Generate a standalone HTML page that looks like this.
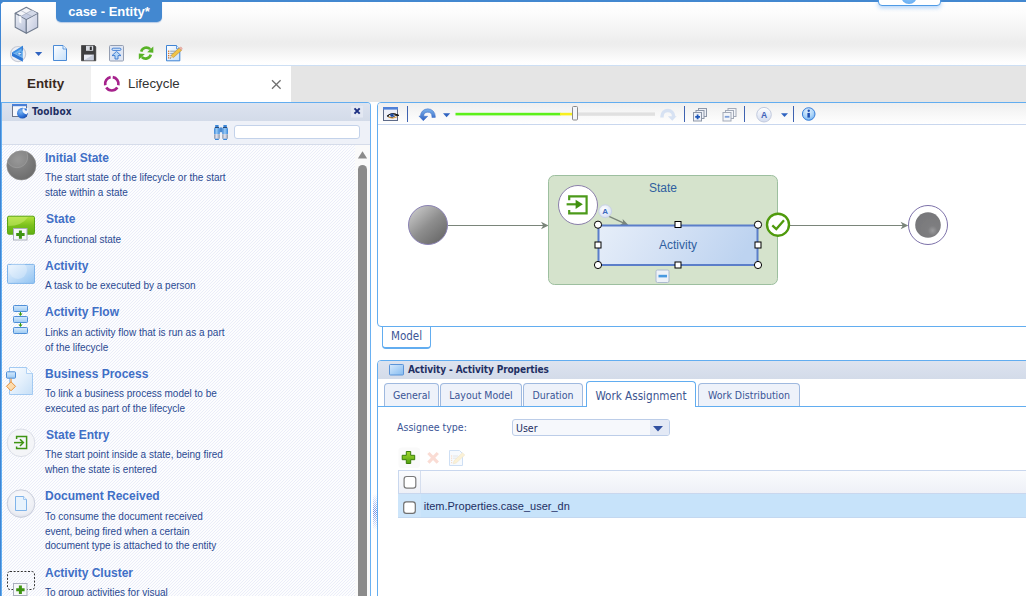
<!DOCTYPE html>
<html><head><meta charset="utf-8"><title>case - Entity</title>
<style>
*{box-sizing:border-box;margin:0;padding:0}
html,body{width:1026px;height:596px;overflow:hidden;background:#fff}
body{font-family:"Liberation Sans",sans-serif;position:relative;font-size:11px;color:#233a7a}
.abs{position:absolute}
#hdr{left:0;top:0;width:1026px;height:66px;background:linear-gradient(#fff 2px,#fcfcfc 14px,#f4f4f4 30px,#ededed 42px,#eeeeee 46px,#f6f6f6 54px,#fefefe 62px,#fff 65px);border-bottom:1px solid #cddff4}
#topb{left:0;top:0;width:1026px;height:2px;background:#4388d0}
#leftb{left:0;top:0;width:1px;height:596px;background:#3f86d4}
#apptab{left:56px;top:0;width:106px;height:22px;background:#4388d0;border-radius:0 0 5px 5px;color:#fff;font-weight:bold;font-size:13px;line-height:24px;text-align:center;box-shadow:0 1px 1px rgba(60,120,200,.35)}
#crn{left:1px;top:2px;width:3px;height:3px;background:radial-gradient(circle at 3px 3px,rgba(67,136,208,0) 2.6px,#4388d0 3.2px)}
#tabbar{left:1px;top:66px;width:1025px;height:36px;background:#e5e5e5}
#tEntity{left:1px;top:66px;width:90px;height:36px;background:#efefef;font-weight:bold;font-size:13.4px;color:#3a2a1e;line-height:36px;padding-left:26px}
#tLife{left:91px;top:66px;width:200px;height:36px;background:#fff;font-size:13.3px;color:#333;line-height:36px}

#tbx{left:1px;top:102px;width:370px;height:494px;border-radius:0 4px 0 0;border-top:1px solid #62adf0;border-right:1px solid #6ab1f2;border-left:1px solid #62adf0;background:#fafafa}
#tbxh{left:2px;top:103px;width:368px;height:18px;border-radius:0 3px 0 0;background:linear-gradient(#dde3ef,#d3dbe9);font-family:"DejaVu Sans Condensed","DejaVu Sans","Liberation Sans",sans-serif}
#tbxh b{position:absolute;left:30px;top:0;line-height:18px;font-size:10px;color:#1e2f63;font-weight:bold;letter-spacing:.15px}
#tbxs{left:2px;top:121px;width:368px;height:24px;background:#eef1f8;border-bottom:1px solid #d5dcea}
#srch{left:234px;top:125px;width:126px;height:14px;border:1px solid #c3d2ea;border-radius:3px;background:#fff}
#list{left:2px;top:145px}
.it b,.it span{position:absolute;left:45px;white-space:nowrap;display:block}
.it b{font-size:12px;line-height:14px;color:#3f6fc6;font-weight:bold}
.it span{font-size:10px;line-height:15px;color:#2a4a92}
#trt{left:878px;top:-4px;width:63px;height:10px;border:1px solid #4f9be6;border-radius:4px;background:#fff;box-shadow:0 2px 4px rgba(90,160,240,.45);overflow:hidden}
#trt i{position:absolute;left:22px;top:-9px;width:16px;height:16px;border-radius:8px;background:radial-gradient(circle at 50% 40%,#9ccffb,#5aa5f0)}
#sbar{left:358px;top:165px;width:9px;height:440px;background:#8b8b8b;border-radius:4.5px}

#mp{left:377px;top:102px;width:660px;height:225px;border:1px solid #62adf0;border-radius:4px 0 0 4px;background:#fff}
#mtb{left:378px;top:103px;width:648px;height:22px;background:linear-gradient(#efefef,#ffffff);border-bottom:1px solid #c9d7ee;border-radius:3px 0 0 0}
.sep{position:absolute;top:106px;width:1px;height:16px;background:#3e62b0}
#mtab{left:382px;top:327px;width:49px;height:22px;border:1px solid #62adf0;border-top:none;border-bottom-width:2px;border-radius:0 0 4px 4px;background:#fff;font-size:11.5px;color:#3b5596;text-align:center;line-height:18px;font-family:"DejaVu Sans Condensed","DejaVu Sans","Liberation Sans",sans-serif}
#pp{left:377px;top:360px;width:660px;height:250px;border:1px solid #62adf0;border-radius:4px 0 0 0;background:#fff}
#pph{left:378px;top:361px;width:648px;height:18px;background:linear-gradient(#dde3ef,#d3dbe9);border-radius:3px 0 0 0;font-family:"DejaVu Sans Condensed","DejaVu Sans","Liberation Sans",sans-serif}
#pph b{position:absolute;left:30px;top:0;line-height:17px;font-size:10px;color:#1e2f63;letter-spacing:-.1px}
#tline{left:378px;top:406px;width:648px;height:1px;background:#62adf0}
.tab{position:absolute;top:383px;height:23px;border:1px solid #9fb9df;border-bottom:none;border-radius:4px 4px 0 0;background:#eef2fa;color:#3b5596;font-size:10.5px;line-height:22px;text-align:center;white-space:nowrap;font-family:"DejaVu Sans Condensed","DejaVu Sans","Liberation Sans",sans-serif}
.tab.act{top:381px;height:26px;background:#fff;border-color:#62adf0;font-size:11.6px;line-height:29px;color:#3d5590}
#lbl{left:397px;top:420px;font-size:10.5px;color:#3b5596;line-height:14px;font-family:"DejaVu Sans Condensed","DejaVu Sans","Liberation Sans",sans-serif}
#sel{left:512px;top:419px;width:158px;height:17px;border:1px solid #bccde8;border-radius:3px;background:#f6f8fc;font-size:10.5px;color:#1e2f63;line-height:16px;padding-left:3px;font-family:"DejaVu Sans Condensed","DejaVu Sans","Liberation Sans",sans-serif}
#selb{left:650px;top:420px;width:19px;height:15px;background:#e3e9f5;border-radius:0 2px 2px 0}
#gh{left:398px;top:470px;width:640px;height:24px;background:linear-gradient(#fafbfd,#eef0f7);border:1px solid #c9d7ee;border-right:none}
#ghc{left:420px;top:471px;width:1px;height:22px;background:#d5deee}
#gr{left:398px;top:494px;width:640px;height:24px;background:#c7e3fa;border-bottom:1px solid #c3d8f0}
#grc{left:398px;top:494px;width:23px;height:23px;background:#cde5fa}
#gtxt{left:423.7px;top:499px;font-size:11px;line-height:14px;color:#1e2f63}
</style></head><body>
<div id="hdr" class="abs"></div>
<div id="topb" class="abs"></div>
<div id="tabbar" class="abs"></div>
<div id="tEntity" class="abs">Entity</div>
<div id="tLife" class="abs"><span class="abs" style="left:37px;top:0">Lifecycle</span></div>
<div id="apptab" class="abs">case - Entity*</div>

<div id="tbx" class="abs"></div>
<div id="tbxh" class="abs"><b>Toolbox</b></div>
<div id="tbxs" class="abs"></div>
<div id="srch" class="abs"></div>
<svg id="list" class="abs" width="353" height="451" shape-rendering="crispEdges"><defs><pattern id="stp" width="3" height="3" patternUnits="userSpaceOnUse"><rect width="3" height="3" fill="#fcfdfe"/><rect x="1" y="0" width="1" height="1" fill="#ebedf9"/><rect x="0" y="1" width="1" height="1" fill="#ebedf9"/><rect x="2" y="2" width="1" height="1" fill="#ebedf9"/></pattern></defs><rect width="353" height="451" fill="url(#stp)"/></svg>
<div id="sbar" class="abs"></div>
<svg class="abs" style="left:358px;top:151px" width="9" height="8"><path d="M4.5 0.3 L9 7.2 Q9 7.6 8.4 7.6 L0.6 7.6 Q0 7.6 0 7.2 Z" fill="#8b8b8b"/></svg>

<div id="mp" class="abs"></div>
<div id="mtb" class="abs"></div>
<div class="sep" style="left:407px"></div><div class="sep" style="left:684px"></div><div class="sep" style="left:744px"></div><div class="sep" style="left:793px"></div>
<div id="mtab" class="abs">Model</div>
<div id="pp" class="abs"></div>
<div id="pph" class="abs"><b>Activity - Activity Properties</b></div>
<div id="tline" class="abs"></div>
<div class="tab" style="left:384px;width:55px">General</div>
<div class="tab" style="left:440px;width:82px">Layout Model</div>
<div class="tab" style="left:523px;width:60px">Duration</div>
<div class="tab act" style="left:586px;width:110px">Work Assignment</div>
<div class="tab" style="left:698px;width:102px">Work Distribution</div>
<div id="lbl" class="abs">Assignee type:</div>
<div id="sel" class="abs">User</div><div id="selb" class="abs"></div>
<svg class="abs" style="left:653px;top:426px" width="10" height="6"><path d="M0 0 L10 0 L5 5.5 Z" fill="#2f4f9f"/></svg>
<div id="gh" class="abs"></div><div id="ghc" class="abs"></div>
<div id="gr" class="abs"></div><div id="grc" class="abs"></div>
<div id="gtxt" class="abs">item.Properties.case_user_dn</div>

<svg id="dg" class="abs" style="left:378px;top:126px" width="648" height="200" viewBox="378 126 648 200">
<defs>
<linearGradient id="gStart" x1="0.15" y1="0.1" x2="0.85" y2="0.9"><stop offset="0" stop-color="#c4c4c4"/><stop offset="0.5" stop-color="#8e8e8e"/><stop offset="1" stop-color="#6a6a6a"/></linearGradient>
<linearGradient id="gAct" x1="0" y1="0" x2="1" y2="0.15"><stop offset="0" stop-color="#e6eef9"/><stop offset="0.45" stop-color="#d5e2f5"/><stop offset="1" stop-color="#bdd3f0"/></linearGradient>
<radialGradient id="gEnd" cx="0.68" cy="0.72" r="0.75"><stop offset="0" stop-color="#9a9a9c"/><stop offset="0.25" stop-color="#7e7e80"/><stop offset="1" stop-color="#77777a"/></radialGradient>
<radialGradient id="gA" cx="0.4" cy="0.35" r="0.7"><stop offset="0" stop-color="#ffffff"/><stop offset="1" stop-color="#d4def2"/></radialGradient>
<filter id="blur1" x="-20%" y="-20%" width="140%" height="140%"><feGaussianBlur stdDeviation="0.6"/></filter>
</defs>
<!-- left connector -->
<line x1="448" y1="225.5" x2="546.5" y2="225.5" stroke="#7a857a" stroke-width="1.2"/>
<path d="M548.6 225.5 L541 221.8 L543.2 225.5 L541 229.2 Z" fill="#7a857a"/>
<circle cx="428" cy="225" r="19.5" fill="url(#gStart)" stroke="#8a82b4" stroke-width="1"/>
<!-- state -->
<rect x="548.5" y="175.5" width="229" height="109" rx="6" ry="6" fill="#d5e3cc" stroke="#9dbf9f" stroke-width="1"/>
<text x="663" y="191.6" font-size="12" fill="#2f5f9f" text-anchor="middle" font-family="Liberation Sans, sans-serif">State</text>
<!-- entry circle -->
<circle cx="578" cy="205" r="19.5" fill="#ffffff" stroke="#8a7faa" stroke-width="1"/>
<path d="M569.2 200.2 V196.4 H586.6 V213.4 H569.2 V210" fill="none" stroke="#4c9a1a" stroke-width="2.2"/>
<path d="M566.6 204.3 H577" fill="none" stroke="#4c9a1a" stroke-width="2.2"/>
<path d="M575.6 199.7 L582.8 204.3 L575.6 208.9 Z" fill="#40900f"/>
<!-- A badge + arrow -->
<line x1="609" y1="216.4" x2="625.5" y2="223.8" stroke="#7a857a" stroke-width="1.3"/>
<path d="M628.4 225.1 L620 224.9 L623.2 222.8 L622.6 219 Z" fill="#7a857a"/>
<circle cx="605.2" cy="211.2" r="6.4" fill="url(#gA)" stroke="#c9d2e6" stroke-width="1"/>
<text x="605.2" y="214.2" font-size="8" font-weight="bold" fill="#3e6cc0" text-anchor="middle" font-family="Liberation Sans, sans-serif">A</text>
<!-- activity -->
<rect x="598.5" y="225.5" width="159" height="39.5" fill="url(#gAct)" stroke="#5b7ec9" stroke-width="2"/>
<text x="678" y="249.2" font-size="12" fill="#2f5f9f" text-anchor="middle" font-family="Liberation Sans, sans-serif">Activity</text>
<!-- handles -->
<g fill="#fff" stroke="#000" stroke-width="1">
<circle cx="598" cy="224.7" r="3.6"/><circle cx="758" cy="224.7" r="3.6"/><circle cx="598" cy="265" r="3.6"/><circle cx="758" cy="265" r="3.6"/>
<rect x="675" y="221.5" width="6" height="6"/><rect x="675" y="262" width="6" height="6"/><rect x="595" y="242" width="6" height="6"/><rect x="755" y="242" width="6" height="6"/>
</g>
<!-- collapse -->
<rect x="656" y="270" width="13" height="12.5" rx="1.5" fill="#eef2f8" stroke="#aebbd0" stroke-width="1"/>
<rect x="658.5" y="274.8" width="8.5" height="2.6" fill="#4a9ae0"/>
<!-- right connector -->
<line x1="790" y1="225.5" x2="906" y2="225.5" stroke="#7a857a" stroke-width="1.2"/>
<path d="M908.3 225.5 L900.6 221.8 L902.8 225.5 L900.6 229.2 Z" fill="#7a857a"/>
<circle cx="778" cy="224.7" r="11" fill="#fff" stroke="#4f9a0c" stroke-width="2.4"/>
<path d="M772.3 225.3 L776.3 229 L784 220.3" fill="none" stroke="#4f9a0c" stroke-width="2.3"/>
<!-- end -->
<circle cx="928" cy="225" r="19.5" fill="#fff" stroke="#7d72aa" stroke-width="1"/>
<circle cx="928" cy="225" r="12.8" fill="url(#gEnd)" filter="url(#blur1)"/>
</svg>

<svg id="hic" class="abs" style="left:0;top:0" width="300" height="102" viewBox="0 0 300 102">
<defs>
<linearGradient id="gDoc" x1="0" y1="0" x2="1" y2="1"><stop offset="0" stop-color="#ffffff"/><stop offset="1" stop-color="#c6e0fa"/></linearGradient>
<linearGradient id="gCubeL" x1="0" y1="0" x2="0.6" y2="1"><stop offset="0" stop-color="#eceff6"/><stop offset="1" stop-color="#bfc7dc"/></linearGradient>
<linearGradient id="gCubeR" x1="0" y1="0" x2="1" y2="0.8"><stop offset="0" stop-color="#f1f3f8"/><stop offset="1" stop-color="#c3c9de"/></linearGradient>
<linearGradient id="gBall" x1="0" y1="0" x2="1" y2="1"><stop offset="0" stop-color="#f4f4f6"/><stop offset="1" stop-color="#b9bdc8"/></linearGradient>
<linearGradient id="gTri" x1="0" y1="0" x2="0" y2="1"><stop offset="0" stop-color="#8cc4f2"/><stop offset="1" stop-color="#2a6fd0"/></linearGradient>
</defs>
<!-- cube -->
<g stroke="#717c8f" stroke-width="1.1" stroke-linejoin="round">
<path d="M15.2 13.2 L26.3 7.2 L37.7 13.2 L26.3 19.5 Z" fill="#f4f5f9"/>
<path d="M15.2 13.2 L26.3 19.5 L26.3 33.3 L15.2 27.3 Z" fill="url(#gCubeL)"/>
<path d="M26.3 19.5 L37.7 13.2 L37.7 27.3 L26.3 33.3 Z" fill="url(#gCubeR)"/>
</g>
<path d="M26.3 13.3 L32 10.2 L37.2 13.2 L31.6 16.3 Z" fill="#d3d9e8"/>
<path d="M26.3 13.3 L31.6 16.3 L26.3 19.1 L20.9 16.3 Z" fill="#c5cde3"/>
<path d="M20.6 10.3 L32 16.5 M20.6 16.5 L32 10.2" stroke="#9aa3b6" stroke-width="0.6" fill="none"/>
<path d="M19.2 15.6 L21.3 16.8 L21.3 23.4 L19.2 22.2 Z" fill="#fbfcfe"/>
<!-- app logo -->
<circle cx="18.1" cy="54.1" r="7.6" fill="#eceef5" stroke="#c6cad4" stroke-width="1.1"/>
<path d="M22.9 45.8 L12 52.5 L22.9 58.1 Z" fill="#6fb4ee"/>
<path d="M22.9 45.8 L12 52.5 L14.4 52.9 L21.6 48.4 Z" fill="#3f8ee2"/>
<path d="M21.4 51.2 L16.6 53.9 L21.4 55.6 Z" fill="#2f78d2"/>
<path d="M19.6 52.6 L17.4 53.9 L19.8 54.7 L21.4 53.6 Z" fill="#dce6f6"/>
<path d="M12 52.5 L12 56.1 L22.9 61.8 L22.9 58.1 Z" fill="#2c77d6"/>
<path d="M22.9 45.8 L22.9 50.4 L21.6 51 L21.6 47 Z" fill="#2f78d2"/>
<!-- dropdown -->
<path d="M35 52 L42.2 52 L38.6 56 Z" fill="#2f63c0"/>
<!-- new doc -->
<path d="M53.5 45.5 L63 45.5 L66.5 49 L66.5 60.5 L53.5 60.5 Z" fill="url(#gDoc)" stroke="#4a8ad6" stroke-width="1"/>
<path d="M63 45.5 L63 49 L66.5 49" fill="#eaf4fe" stroke="#4a8ad6" stroke-width="0.8"/>
<!-- save -->
<path d="M81.5 45.5 L94.5 45.5 L95.8 46.8 L95.8 60.8 L81.5 60.8 Z" fill="#3f3f41" stroke="#2b2b2d" stroke-width="0.6"/>
<rect x="86" y="45.8" width="7.2" height="5" fill="#d8dbe2"/>
<rect x="89.8" y="46.6" width="2" height="3.4" fill="#2e2e30"/>
<rect x="84" y="54.6" width="9.6" height="5.6" fill="#e8ebf4"/>
<path d="M84 60.2 L93.6 54.6 L93.6 60.2 Z" fill="#c6ccdc"/>
<!-- publish -->
<rect x="109.5" y="45.5" width="14" height="15.5" rx="1" fill="#dfe6f3" stroke="#949eb2" stroke-width="1"/>
<rect x="112" y="48.2" width="9" height="2.2" rx="1.1" fill="#dcebfb" stroke="#3576cf" stroke-width="0.9"/>
<path d="M116.5 51.4 L121 55.6 L118 55.6 L118 59 L115 59 L115 55.6 L112 55.6 Z" fill="#b9d8f7" stroke="#3576cf" stroke-width="0.9" stroke-linejoin="round"/>
<!-- refresh -->
<g fill="none" stroke="#58b327" stroke-width="2.6">
<path d="M141.2 51.6 A5.4 5.4 0 0 1 150.2 49.2"/>
<path d="M150.8 54.6 A5.4 5.4 0 0 1 141.8 57"/>
</g>
<path d="M153.3 46.6 L153.3 52.8 L147.2 52.2 Z" fill="#58b327"/>
<path d="M138.8 59.6 L138.8 53.4 L144.9 54 Z" fill="#58b327"/>
<!-- edit -->
<path d="M166.5 45.5 L176.5 45.5 L179.8 48.8 L179.8 60.8 L166.5 60.8 Z" fill="url(#gDoc)" stroke="#3f84d4" stroke-width="1"/>
<path d="M176.5 45.5 L176.5 48.8 L179.8 48.8" fill="#eaf4fe" stroke="#3f84d4" stroke-width="0.8"/>
<g fill="#d9742a"><rect x="168" y="50.6" width="1.3" height="1.3"/><rect x="168" y="52.8" width="1.3" height="1.3"/><rect x="168" y="55" width="1.3" height="1.3"/><rect x="168" y="57.2" width="1.3" height="1.3"/></g>
<g stroke="#7a8aa0" stroke-width="0.8"><path d="M170.2 51.2 H176 M170.2 53.4 H175 M170.2 55.6 H173"/></g>
<path d="M179.2 48 L181.6 50.2 L173.4 57.6 L171 55.4 Z" fill="#f0c446" stroke="#b8862a" stroke-width="0.6"/>
<path d="M171 55.4 L173.4 57.6 L169.8 58.6 Z" fill="#e9cfa0"/>
<path d="M170.4 57.6 L171 58.2 L169.8 58.6 Z" fill="#3a2a1a"/>
<path d="M179.2 48 L180.2 47.2 Q181.6 46.8 182.2 48.4 L181.6 50.2 Z" fill="#f3b9b0" stroke="#c98a80" stroke-width="0.4"/>
<path d="M272 80.2 L280.6 88.8 M280.6 80.2 L272 88.8" stroke="#707070" stroke-width="1.25" fill="none"/>
<!-- lifecycle icon -->
<g fill="none" stroke="#a6228c" stroke-width="2.7">
<path d="M112.73 77.17 A6.7 6.7 0 0 1 118.35 85.19"/><path d="M117.35 87.55 A6.7 6.7 0 0 1 106.25 87.55"/><path d="M105.25 85.19 A6.7 6.7 0 0 1 110.64 77.20"/>
</g>
</svg>

<svg id="mic" class="abs" style="left:378px;top:103px" width="648" height="22" viewBox="378 103 648 22">
<defs>
<linearGradient id="gUndo" x1="0" y1="0" x2="0" y2="1"><stop offset="0" stop-color="#7db3ec"/><stop offset="1" stop-color="#2f62c2"/></linearGradient>
<radialGradient id="gInfo" cx="0.45" cy="0.3" r="0.8"><stop offset="0" stop-color="#e4f2fe"/><stop offset="0.55" stop-color="#a9d3f8"/><stop offset="1" stop-color="#5fa6ec"/></radialGradient>
<linearGradient id="gAb" x1="0" y1="0" x2="0" y2="1"><stop offset="0" stop-color="#ffffff"/><stop offset="1" stop-color="#d3dcef"/></linearGradient>
</defs>
<!-- eye window -->
<rect x="383.5" y="107.5" width="14" height="13" fill="#eef0f8" stroke="#5d6a88" stroke-width="1"/>
<rect x="383" y="107" width="15" height="2.6" fill="#4f80d8"/>
<path d="M387.4 116.2 Q391.4 111.6 398.6 115.4 Q395 114.6 392.6 117.4 Q389.6 117.8 387.4 116.2 Z" fill="#fff" stroke="#151515" stroke-width="0.9"/>
<path d="M387.2 116.2 Q391.4 111.8 398.8 115.5" fill="none" stroke="#151515" stroke-width="1.1"/>
<circle cx="392" cy="115.3" r="1.8" fill="#2c62c8"/><circle cx="392" cy="115.3" r="0.7" fill="#0d1c40"/>
<path d="M388.6 117.3 Q392.4 119.4 397 116.8" stroke="#e0942a" stroke-width="0.9" fill="none"/>
<!-- undo -->
<path d="M420.3 116.3 A7.5 7.5 0 0 1 435.3 116.3 L435.3 117.4 L431.9 117.4 L431.9 116.3 A4.1 4.1 0 0 0 423.7 116.3 L427.7 116.3 L423.3 120.7 L418.9 116 Z" fill="url(#gUndo)" stroke="#3868c4" stroke-width="0.5" stroke-linejoin="round"/>
<path d="M443 113.2 L450.2 113.2 L446.6 117.2 Z" fill="#2f63c0"/>
<!-- slider -->
<rect x="578" y="112.4" width="77" height="3.4" fill="#e0e0e0"/>
<rect x="455.5" y="112.8" width="105" height="2.6" fill="#5cf019"/>
<rect x="560" y="112.8" width="12.5" height="2.6" fill="#f7f01e"/>
<rect x="572.5" y="106.5" width="5" height="13.5" rx="1" fill="#f4f6fa" stroke="#8a8a8a" stroke-width="1"/>
<!-- redo faded -->
<path d="M675.3 116.3 A7.5 7.5 0 0 0 660.3 116.3 L660.3 117.4 L663.7 117.4 L663.7 116.3 A4.1 4.1 0 0 1 671.9 116.3 L667.9 116.3 L672.3 120.7 L676.7 116 Z" fill="#d3dff2" opacity="0.9"/>
<!-- expand all -->
<g stroke="#8e97a8" stroke-width="1" fill="#eef1f7">
<rect x="698.5" y="108.5" width="8" height="8"/><rect x="696" y="110.5" width="8" height="8"/><rect x="693.5" y="112.5" width="8" height="8.5"/>
</g>
<path d="M695.2 116.8 H700 M697.6 114.4 V119.2" stroke="#1f57b8" stroke-width="1.8" fill="none"/>
<!-- collapse all -->
<g stroke="#a3aab8" stroke-width="1" fill="#f3f5f9">
<rect x="728" y="108.5" width="8" height="8"/><rect x="725.5" y="110.5" width="8" height="8"/><rect x="723" y="112.5" width="8" height="8.5"/>
</g>
<path d="M724.8 116.8 H729.4" stroke="#7e9fd8" stroke-width="1.8" fill="none"/>
<!-- A -->
<circle cx="764" cy="114.7" r="7.3" fill="url(#gAb)" stroke="#c2cade" stroke-width="1"/>
<text x="764" y="118" font-size="8.5" font-weight="bold" fill="#3e62b8" text-anchor="middle" font-family="Liberation Sans, sans-serif">A</text>
<path d="M781 113.3 L788 113.3 L784.5 117 Z" fill="#2f63c0"/>
<!-- info -->
<circle cx="808.7" cy="114" r="6.3" fill="url(#gInfo)" stroke="#3b7fd8" stroke-width="1"/>
<circle cx="808.7" cy="110.7" r="1.2" fill="#1f4fb0"/>
<path d="M807.4 112.9 H809.9 V117.6 H807.4 Z" fill="#1f4fb0"/>
</svg>

<svg id="tic" class="abs" style="left:2px;top:102px" width="368" height="494" viewBox="2 102 368 494">
<defs>
<radialGradient id="gInit" cx="0.38" cy="0.3" r="0.75"><stop offset="0" stop-color="#8f8f8f"/><stop offset="1" stop-color="#6b6b6b"/></radialGradient>
<linearGradient id="gState" x1="0" y1="0" x2="0" y2="1"><stop offset="0" stop-color="#b3e23c"/><stop offset="0.5" stop-color="#7cc11d"/><stop offset="1" stop-color="#5fb011"/></linearGradient>
<linearGradient id="gActI" x1="0" y1="0" x2="1" y2="1"><stop offset="0" stop-color="#eaf4fe"/><stop offset="0.5" stop-color="#bfdcf8"/><stop offset="1" stop-color="#90c3f2"/></linearGradient>
<linearGradient id="gBP" x1="0" y1="0" x2="1" y2="1"><stop offset="0" stop-color="#fbfdff"/><stop offset="0.5" stop-color="#e4f0fc"/><stop offset="1" stop-color="#c6dff7"/></linearGradient><linearGradient id="gBox" x1="0" y1="0" x2="0" y2="1"><stop offset="0" stop-color="#d6eafc"/><stop offset="1" stop-color="#9ccaf3"/></linearGradient>
<radialGradient id="gCirc" cx="0.5" cy="0.35" r="0.75"><stop offset="0" stop-color="#fcfcfd"/><stop offset="0.7" stop-color="#eceef4"/><stop offset="1" stop-color="#cfd4e2"/></radialGradient>
<radialGradient id="gWr" cx="0.35" cy="0.35" r="0.8"><stop offset="0" stop-color="#7db6f2"/><stop offset="0.6" stop-color="#2b6fd6"/><stop offset="1" stop-color="#153f9e"/></radialGradient>
<linearGradient id="gBinB" x1="0" y1="0" x2="1" y2="0"><stop offset="0" stop-color="#3b86d8"/><stop offset="0.45" stop-color="#9acbf5"/><stop offset="1" stop-color="#3b86d8"/></linearGradient><linearGradient id="gBinG" x1="0" y1="0" x2="1" y2="0"><stop offset="0" stop-color="#8a97a8"/><stop offset="0.45" stop-color="#e2e2f0"/><stop offset="1" stop-color="#8a97a8"/></linearGradient><linearGradient id="gBin" x1="0" y1="0" x2="0" y2="1"><stop offset="0" stop-color="#2f6fcc"/><stop offset="0.55" stop-color="#6aa9ee"/><stop offset="0.7" stop-color="#d0d6e2"/><stop offset="1" stop-color="#eef1f6"/></linearGradient>
</defs>
<!-- toolbox header icon -->
<rect x="12.5" y="104.5" width="14" height="12" fill="#f6f7fb" stroke="#6c7488" stroke-width="1"/>
<rect x="12" y="104" width="15" height="2.2" fill="#4a7fd6"/>
<circle cx="22.4" cy="113.2" r="5.4" fill="url(#gWr)"/>
<path d="M22.6 108.4 Q21.6 112.8 26.4 114.4 L28.4 112.2 L28.4 108 Z" fill="#f6f7fb"/>
<path d="M24.2 108.6 Q24.4 110.8 26.8 110.8 L26.8 108.6 Z" fill="#2b6fd6"/>
<!-- close -->
<rect x="351" y="106" width="12" height="11.5" fill="#e3e8f2"/>
<path d="M354.5 108.4 L359.7 113.6 M359.7 108.4 L354.5 113.6" stroke="#1c2f82" stroke-width="2" fill="none"/>
<!-- binoculars -->
<g>
<rect x="219.6" y="127.4" width="2.8" height="4.8" fill="#4a8ad0"/>
<rect x="215.2" y="125" width="3.4" height="2.2" fill="#3b86d8"/>
<rect x="214.8" y="127" width="4.2" height="1.1" fill="#2a4a78"/>
<rect x="214" y="128" width="5.8" height="6.4" rx="0.8" fill="url(#gBinB)"/>
<rect x="214" y="134.3" width="5.8" height="4.5" fill="url(#gBinG)"/>
<rect x="215" y="138.7" width="3.8" height="1.3" fill="#3b86d8"/>
<rect x="223.39999999999998" y="125" width="3.4" height="2.2" fill="#3b86d8"/>
<rect x="223.0" y="127" width="4.2" height="1.1" fill="#2a4a78"/>
<rect x="222.2" y="128" width="5.8" height="6.4" rx="0.8" fill="url(#gBinB)"/>
<rect x="222.2" y="134.3" width="5.8" height="4.5" fill="url(#gBinG)"/>
<rect x="223.2" y="138.7" width="3.8" height="1.3" fill="#3b86d8"/>
</g>
<!-- initial state -->
<circle cx="21.4" cy="165.4" r="14.6" fill="url(#gInit)" stroke="#909090" stroke-width="0.6"/>
<clipPath id="cInit"><circle cx="21.4" cy="165.4" r="14.4"/></clipPath><circle cx="17" cy="157" r="10.7" fill="#ffffff" fill-opacity="0.08" stroke="#a0a0a0" stroke-width="0.7" clip-path="url(#cInit)"/>
<!-- state -->
<rect x="7.5" y="216.2" width="27" height="18" rx="1.5" fill="url(#gState)" stroke="#5aa514" stroke-width="1"/>
<path d="M8.2 226 Q22 226 28 217 L9 217 Q8.2 217 8.2 218 Z" fill="#c9ec6a" opacity="0.55"/>
<rect x="13.5" y="228.5" width="13.5" height="11.5" fill="#f6f7f9" stroke="#a9afbb" stroke-width="1"/>
<path d="M16.2 234.6 H24.6 M20.4 230.4 V238.8" stroke="#3f9412" stroke-width="3" fill="none"/>
<!-- activity -->
<rect x="7.5" y="264.4" width="27" height="19" rx="1" fill="url(#gActI)" stroke="#7fb4ea" stroke-width="1"/>
<circle cx="18" cy="270" r="9" fill="#ffffff" opacity="0.25"/>
<!-- activity flow -->
<g fill="url(#gBox)" stroke="#4f8fd8" stroke-width="1">
<rect x="13.5" y="305.5" width="14" height="6" rx="0.8"/><rect x="13.5" y="316.5" width="14" height="6" rx="0.8"/><rect x="13.5" y="327.5" width="14" height="6" rx="0.8"/>
</g>
<path d="M20.5 312 V315 M20.5 323 V326" stroke="#3a9a12" stroke-width="1"/>
<path d="M18.4 313.6 H22.6 L20.5 316 Z M18.4 324.6 H22.6 L20.5 327 Z" fill="#3a9a12"/>
<!-- business process -->
<path d="M9.5 367.5 L26.5 367.5 L32.5 373.5 L32.5 394.5 L9.5 394.5 Z" fill="url(#gBP)" stroke="#a3caf2" stroke-width="1"/>
<path d="M26.5 367.5 L26.5 373.5 L32.5 373.5" fill="#f6fafe" stroke="#a3caf2" stroke-width="0.8"/>
<rect x="6.5" y="371.8" width="9" height="6.4" rx="0.8" fill="url(#gBox)" stroke="#4f8fd8" stroke-width="1"/>
<path d="M11 378.6 V382.4" stroke="#e8923a" stroke-width="1.2"/>
<path d="M11 381.8 L15.5 386.3 L11 390.8 L6.5 386.3 Z" fill="#fcdcae" stroke="#e8923a" stroke-width="1"/>
<!-- state entry -->
<circle cx="21" cy="442.8" r="13.8" fill="#f4f5f8" stroke="#dcdfe8" stroke-width="1"/>
<path d="M16.6 439 V436.6 H26.6 V448.6 H16.6 V446.4" fill="none" stroke="#3f9412" stroke-width="1.5"/>
<path d="M14 442.6 H23" stroke="#3f9412" stroke-width="1.5" fill="none"/>
<path d="M20 439.2 L23.4 442.6 L20 446" stroke="#3f9412" stroke-width="1.5" fill="none"/>
<!-- document received -->
<circle cx="21" cy="503.6" r="13.8" fill="url(#gCirc)" stroke="#c9cedc" stroke-width="1"/>
<path d="M15.5 496.5 L23.6 496.5 L26.5 499.4 L26.5 510.5 L15.5 510.5 Z" fill="#e8f3fd" stroke="#7fb4ea" stroke-width="1"/>
<path d="M23.6 496.5 L23.6 499.4 L26.5 499.4" fill="#fff" stroke="#7fb4ea" stroke-width="0.8"/>
<!-- activity cluster -->
<rect x="7.5" y="571.5" width="27" height="18" rx="2.5" fill="none" stroke="#333" stroke-width="1" stroke-dasharray="2 1.6"/>
<rect x="13.5" y="583.5" width="13.5" height="12" fill="#f6f7f9" stroke="#a9afbb" stroke-width="1"/>
<path d="M16.2 589.8 H24.6 M20.4 585.6 V594" stroke="#3f9412" stroke-width="3" fill="none"/>
</svg>
<div class="it"><b style="top:151px;left:45px">Initial State</b><span style="top:170px">The start state of the lifecycle or the start</span><span style="top:185px">state within a state</span></div>
<div class="it"><b style="top:212px;left:46px">State</b><span style="top:232px">A functional state</span></div>
<div class="it"><b style="top:259px;left:45px">Activity</b><span style="top:278px">A task to be executed by a person</span></div>
<div class="it"><b style="top:305px;left:45px">Activity Flow</b><span style="top:325px">Links an activity flow that is run as a part</span><span style="top:340px">of the lifecycle</span></div>
<div class="it"><b style="top:367px;left:45px">Business Process</b><span style="top:386px">To link a business process model to be</span><span style="top:401px">executed as part of the lifecycle</span></div>
<div class="it"><b style="top:428px;left:46px">State Entry</b><span style="top:447px">The start point inside a state, being fired</span><span style="top:462px">when the state is entered</span></div>
<div class="it"><b style="top:489px;left:45px">Document Received</b><span style="top:509px">To consume the document received</span><span style="top:524px">event, being fired when a certain</span><span style="top:538px">document type is attached to the entity</span></div>
<div class="it"><b style="top:566px;left:45px">Activity Cluster</b><span style="top:585px">To group activities for visual</span></div>

<svg id="pic" class="abs" style="left:370px;top:355px" width="120" height="241" viewBox="370 355 120 241">
<defs>
<linearGradient id="gPlus" x1="0" y1="0" x2="0" y2="1"><stop offset="0" stop-color="#a2d630"/><stop offset="0.45" stop-color="#7fc21f"/><stop offset="1" stop-color="#4f9f10"/></linearGradient>
<linearGradient id="gActP" x1="0" y1="0" x2="1" y2="1"><stop offset="0" stop-color="#d8eafc"/><stop offset="0.55" stop-color="#a9d0f6"/><stop offset="1" stop-color="#84bbf0"/></linearGradient>
</defs>
<!-- props header icon -->
<rect x="389.5" y="364.5" width="14" height="10.5" rx="0.8" fill="url(#gActP)" stroke="#5b94d8" stroke-width="1"/>
<!-- add button -->
<rect x="398.5" y="447.5" width="21.5" height="20.5" rx="3" fill="#fafafa"/>
<path d="M406.3 451.5 H410.7 V455.3 H414.7 V459.7 H410.7 V463.5 H406.3 V459.7 H402.2 V455.3 H406.3 Z" fill="url(#gPlus)" stroke="#3a7d0a" stroke-width="1" stroke-linejoin="round"/>
<!-- delete faded -->
<path d="M428.4 453 L437.8 462.6 M437.8 453 L428.4 462.6" stroke="#fadcd4" stroke-width="3.2" fill="none"/>
<!-- edit faded -->
<g opacity="0.3">
<path d="M449.5 450.5 L459.5 450.5 L462.5 453.5 L462.5 465.5 L449.5 465.5 Z" fill="#e6f1fc" stroke="#5f98dc" stroke-width="1"/>
<g fill="#e58a4a"><rect x="451" y="455.4" width="1.2" height="1.2"/><rect x="451" y="457.6" width="1.2" height="1.2"/><rect x="451" y="459.8" width="1.2" height="1.2"/><rect x="451" y="462" width="1.2" height="1.2"/></g>
<path d="M453 456 H458 M453 458.2 H457" stroke="#8a9ab0" stroke-width="0.8"/>
<path d="M462.4 452.8 L464.8 455 L456.2 463 L453.2 463.8 L454 460.8 Z" fill="#f2d27a" stroke="#c9a75a" stroke-width="0.6"/>
</g>
<rect x="404.1" y="476.5" width="11.7" height="11.7" rx="2.6" fill="#fff" stroke="#7a7a7a" stroke-width="1.2"/>
<rect x="403.7" y="501.8" width="11.6" height="11.6" rx="2.6" fill="#fff" stroke="#707070" stroke-width="1.2"/>
<!-- splitter grip -->
<defs><pattern id="chk" width="2" height="2" patternUnits="userSpaceOnUse"><rect x="0" y="0" width="1" height="1" fill="#5f7fe0"/><rect x="1" y="1" width="1" height="1" fill="#5f7fe0"/></pattern>
<linearGradient id="gFade" x1="0" y1="0" x2="0" y2="1"><stop offset="0" stop-color="#000"/><stop offset="0.5" stop-color="#ddd"/><stop offset="1" stop-color="#000"/></linearGradient>
<mask id="mFade" maskUnits="userSpaceOnUse" x="373" y="494" width="4" height="36"><rect x="373" y="494" width="4" height="36" fill="url(#gFade)"/></mask></defs>
<rect x="373" y="494" width="4" height="36" fill="url(#chk)" mask="url(#mFade)" shape-rendering="crispEdges"/>
</svg>
<div id="trt" class="abs"><i></i></div>
<div id="leftb" class="abs"></div><div id="crn" class="abs"></div>
</body></html>
